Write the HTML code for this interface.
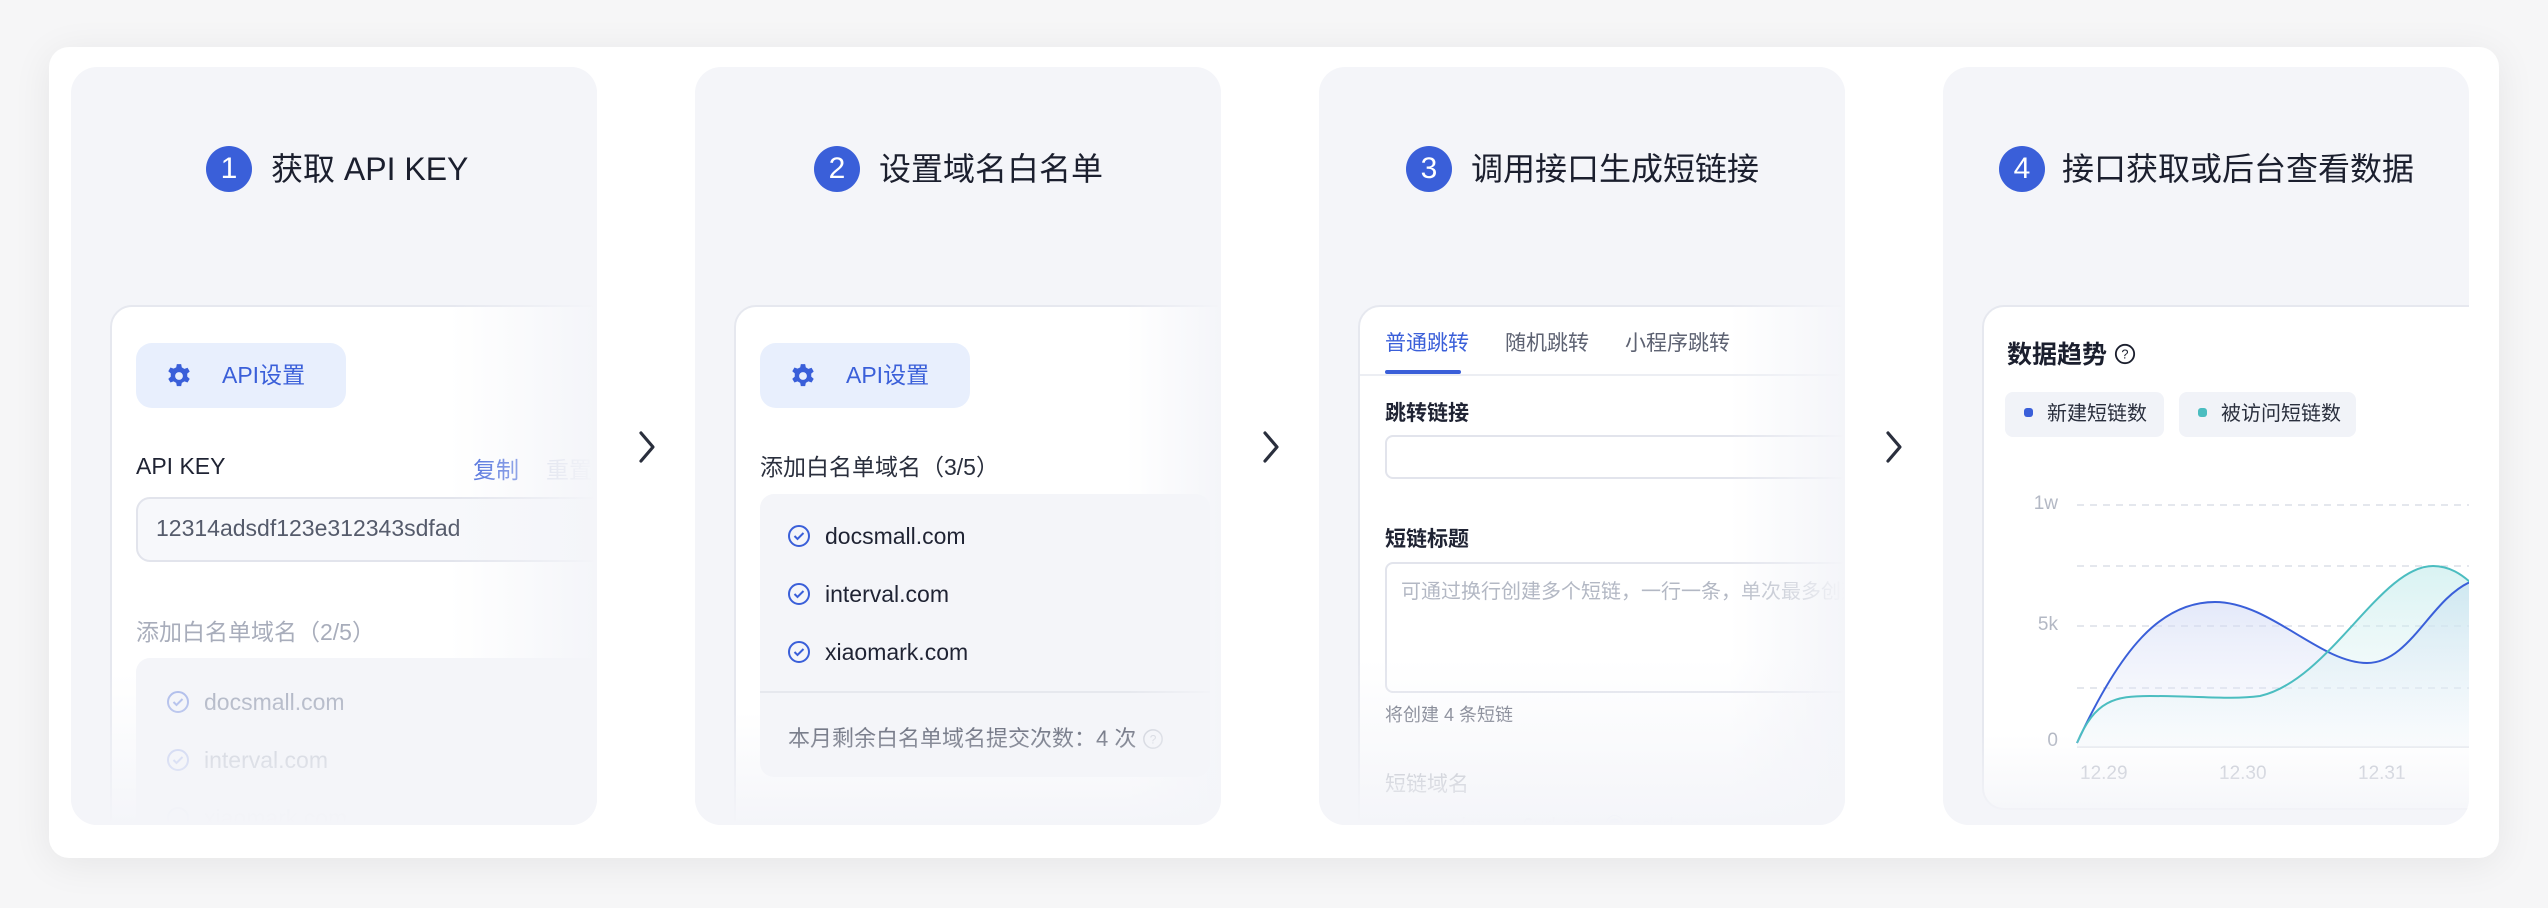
<!DOCTYPE html>
<html><head><meta charset="utf-8"><style>
*{margin:0;padding:0;box-sizing:border-box}
body{width:2548px;height:908px;background:#f6f6f7;font-family:"Liberation Sans","Noto Sans CJK SC",sans-serif;position:relative;overflow:hidden;color:#1f2333}
.a{position:absolute;white-space:nowrap}
.outer{left:49px;top:47px;width:2450px;height:811px;background:#fff;border-radius:20px;box-shadow:0 6px 40px rgba(0,0,0,.07)}
.panel{top:67px;width:526px;height:758px;background:#f4f5f9;border-radius:26px;overflow:hidden}
.num{width:46px;height:46px;border-radius:50%;background:#3a5fd9;color:#fff;font-size:30px;line-height:46px;text-align:center;top:146px}
.ttl{top:146px;font-size:32px;line-height:46px;color:#1b1f2e}
.card{background:#fff;border:2px solid #e6e8ef;border-radius:22px;}
.fade{position:absolute;pointer-events:none}
.btn{background:#e8effd;border-radius:16px;height:65px;color:#3a5fd9;font-size:23px;line-height:65px}
.chev{top:430px}
.blue{color:#3a5fd9}
.it{height:58px;line-height:58px;font-size:23px}
.it svg{vertical-align:-4px;margin-right:14px}
</style></head><body>
<div class="a outer"></div>

<!-- panel 1 -->
<div class="a panel" style="left:71px">
  <div class="a card" style="left:39px;top:238px;width:600px;height:600px"></div>
  <div class="a btn" style="left:65px;top:276px;width:210px"><svg class="a" style="left:30px;top:20px" width="26" height="26" viewBox="0 0 24 24"><path fill="#3a5fd9" d="M10 1h4l.6 3 2.4 1.4 2.9-1 2 3.4-2.3 2v2.8l2.3 2-2 3.4-2.9-1-2.4 1.4-.6 3h-4l-.6-3-2.4-1.4-2.9 1-2-3.4 2.3-2V9.6l-2.3-2 2-3.4 2.9 1L9.4 4z"/><circle cx="12" cy="12" r="3.6" fill="#e8effd"/></svg><span class="a" style="left:86px;top:0">API设置</span></div>
  <div class="a" style="left:65px;top:386px;font-size:23px">API KEY</div>
  <div class="a blue" style="left:402px;top:384px;font-size:23px">复制</div>
  <div class="a" style="left:475px;top:384px;font-size:23px;color:#c5cbe0">重置</div>
  <div class="a" style="left:65px;top:430px;width:500px;height:65px;border:2px solid #e2e4ec;border-radius:14px;background:#f7f8fb"></div>
  <div class="a" style="left:85px;top:448px;font-size:23px;color:#555b6b">12314adsdf123e312343sdfad</div>
  <div class="a" style="left:65px;top:546px;font-size:23px;color:#a8adbb">添加白名单域名（2/5）</div>
  <div class="a" style="left:65px;top:591px;width:480px;height:200px;background:#f4f5f9;border-radius:14px"></div>
  <div class="a" style="left:95px;top:606px;color:#aab0c0">
    <div class="it"><svg width="24" height="24" viewBox="0 0 24 24"><circle cx="12" cy="12" r="10" fill="none" stroke="#a9b8ea" stroke-width="2"/><path d="M7.5 12l3 3 6-6" fill="none" stroke="#a9b8ea" stroke-width="2"/></svg>docsmall.com</div>
    <div class="it"><svg width="24" height="24" viewBox="0 0 24 24"><circle cx="12" cy="12" r="10" fill="none" stroke="#b8c4ee" stroke-width="2"/><path d="M7.5 12l3 3 6-6" fill="none" stroke="#b8c4ee" stroke-width="2"/></svg><span style="color:#bcc1cd">interval.com</span></div>
    <div class="it"><svg width="24" height="24" viewBox="0 0 24 24"><circle cx="12" cy="12" r="10" fill="none" stroke="#dde2f3" stroke-width="2"/></svg><span style="color:#dfe2e9">xiaomark.com</span></div>
  </div>
  <div class="fade" style="left:0;top:0;width:526px;height:758px;background:linear-gradient(90deg,rgba(244,245,249,0) 72%,#f4f5f9 100%)"></div>
  <div class="fade" style="left:0;top:0;width:526px;height:758px;background:linear-gradient(180deg,rgba(244,245,249,0) 80%,#f4f5f9 100%)"></div>
</div>
<div class="a num" style="left:206px">1</div>
<div class="a ttl" style="left:271px">获取 API KEY</div>
<svg class="a chev" style="left:638px" width="18" height="34" viewBox="0 0 18 34"><path d="M3 3l12 14L3 31" fill="none" stroke="#2a2f3d" stroke-width="3.2" stroke-linecap="round" stroke-linejoin="round"/></svg>

<!-- panel 2 -->
<div class="a panel" style="left:695px">
  <div class="a card" style="left:39px;top:238px;width:600px;height:600px"></div>
  <div class="a btn" style="left:65px;top:276px;width:210px"><svg class="a" style="left:30px;top:20px" width="26" height="26" viewBox="0 0 24 24"><path fill="#3a5fd9" d="M10 1h4l.6 3 2.4 1.4 2.9-1 2 3.4-2.3 2v2.8l2.3 2-2 3.4-2.9-1-2.4 1.4-.6 3h-4l-.6-3-2.4-1.4-2.9 1-2-3.4 2.3-2V9.6l-2.3-2 2-3.4 2.9 1L9.4 4z"/><circle cx="12" cy="12" r="3.6" fill="#e8effd"/></svg><span class="a" style="left:86px;top:0">API设置</span></div>
  <div class="a" style="left:65px;top:381px;font-size:23px;color:#2a2f3d">添加白名单域名（3/5）</div>
  <div class="a" style="left:65px;top:427px;width:450px;height:283px;background:#f4f5f9;border-radius:14px"></div>
  <div class="a" style="left:65px;top:624px;width:450px;height:2px;background:#e6e8ee"></div>
  <div class="a" style="left:92px;top:440px;color:#1f2333">
    <div class="it"><svg width="24" height="24" viewBox="0 0 24 24"><circle cx="12" cy="12" r="10" fill="none" stroke="#3a5fd9" stroke-width="2"/><path d="M7.5 12l3 3 6-6" fill="none" stroke="#3a5fd9" stroke-width="2"/></svg>docsmall.com</div>
    <div class="it"><svg width="24" height="24" viewBox="0 0 24 24"><circle cx="12" cy="12" r="10" fill="none" stroke="#3a5fd9" stroke-width="2"/><path d="M7.5 12l3 3 6-6" fill="none" stroke="#3a5fd9" stroke-width="2"/></svg>interval.com</div>
    <div class="it"><svg width="24" height="24" viewBox="0 0 24 24"><circle cx="12" cy="12" r="10" fill="none" stroke="#3a5fd9" stroke-width="2"/><path d="M7.5 12l3 3 6-6" fill="none" stroke="#3a5fd9" stroke-width="2"/></svg>xiaomark.com</div>
  </div>
  <div class="a" style="left:93px;top:654px;font-size:22px;color:#5d6272">本月剩余白名单域名提交次数：4 次 <svg width="22" height="22" viewBox="0 0 24 24" style="vertical-align:-4px"><circle cx="12" cy="12" r="10" fill="none" stroke="#c5c9d3" stroke-width="1.6"/><text x="12" y="17" font-size="13" text-anchor="middle" fill="#c5c9d3" font-family="Liberation Sans">?</text></svg></div>
  <div class="fade" style="left:0;top:0;width:526px;height:758px;background:linear-gradient(90deg,rgba(244,245,249,0) 82%,#f4f5f9 100%)"></div>
  <div class="fade" style="left:0;top:0;width:526px;height:758px;background:linear-gradient(180deg,rgba(244,245,249,0) 85%,#f4f5f9 100%)"></div>
</div>
<div class="a num" style="left:814px">2</div>
<div class="a ttl" style="left:879px">设置域名白名单</div>
<svg class="a chev" style="left:1262px" width="18" height="34" viewBox="0 0 18 34"><path d="M3 3l12 14L3 31" fill="none" stroke="#2a2f3d" stroke-width="3.2" stroke-linecap="round" stroke-linejoin="round"/></svg>

<!-- panel 3 -->
<div class="a panel" style="left:1319px">
  <div class="a card" style="left:39px;top:238px;width:600px;height:600px"></div>
  <div class="a" style="left:66px;top:260px;font-size:21px;color:#3a5fd9">普通跳转</div>
  <div class="a" style="left:186px;top:260px;font-size:21px;color:#5d6272">随机跳转</div>
  <div class="a" style="left:306px;top:260px;font-size:21px;color:#5d6272">小程序跳转</div>
  <div class="a" style="left:41px;top:307px;width:500px;height:2px;background:#eceef3"></div>
  <div class="a" style="left:66px;top:303px;width:76px;height:4px;background:#3a5fd9;border-radius:2px"></div>
  <div class="a" style="left:66px;top:330px;font-size:21px;font-weight:bold">跳转链接</div>
  <div class="a" style="left:66px;top:368px;width:500px;height:44px;border:2px solid #e2e4ec;border-radius:8px"></div>
  <div class="a" style="left:66px;top:456px;font-size:21px;font-weight:bold">短链标题</div>
  <div class="a" style="left:66px;top:495px;width:500px;height:131px;border:2px solid #e2e4ec;border-radius:8px"></div>
  <div class="a" style="left:82px;top:508px;font-size:20px;color:#b3b8c4">可通过换行创建多个短链，一行一条，单次最多创建</div>
  <div class="a" style="left:66px;top:634px;font-size:18px;color:#5d6272">将创建 4 条短链</div>
  <div class="a" style="left:66px;top:701px;font-size:21px;color:#8a8f9c">短链域名</div>
  <div class="a" style="left:66px;top:742px;font-size:20px;color:#d0d4de">○ s.xma.im &nbsp;&nbsp; ○ 6url.co &nbsp;&nbsp; <span style="color:#c5cff0">◉ sourl.co</span></div>
  <div class="fade" style="left:0;top:0;width:526px;height:758px;background:linear-gradient(90deg,rgba(244,245,249,0) 78%,#f4f5f9 100%)"></div>
  <div class="fade" style="left:0;top:0;width:526px;height:758px;background:linear-gradient(180deg,rgba(244,245,249,0) 78%,#f4f5f9 100%)"></div>
</div>
<div class="a num" style="left:1406px">3</div>
<div class="a ttl" style="left:1471px">调用接口生成短链接</div>
<svg class="a chev" style="left:1885px" width="18" height="34" viewBox="0 0 18 34"><path d="M3 3l12 14L3 31" fill="none" stroke="#2a2f3d" stroke-width="3.2" stroke-linecap="round" stroke-linejoin="round"/></svg>

<!-- panel 4 -->
<div class="a panel" style="left:1943px">
  <div class="a card" style="left:39px;top:238px;width:600px;height:505px"></div>
  <div class="a" style="left:64px;top:268px;font-size:25px;font-weight:bold;color:#1b1f2e">数据趋势 <svg width="22" height="22" viewBox="0 0 24 24" style="vertical-align:-2px"><circle cx="12" cy="12" r="10" fill="none" stroke="#1b1f2e" stroke-width="2"/><text x="12" y="17" font-size="14" text-anchor="middle" fill="#1b1f2e" font-family="Liberation Sans" font-weight="normal">?</text></svg></div>
  <div class="a" style="left:62px;top:325px;width:159px;height:45px;background:#f1f3f8;border-radius:8px;font-size:20px;line-height:45px;color:#2a2f3d"><span style="display:inline-block;width:9px;height:9px;border-radius:3px;background:#3a5fd9;margin:0 14px 3px 19px"></span>新建短链数</div>
  <div class="a" style="left:236px;top:325px;width:177px;height:45px;background:#f1f3f8;border-radius:8px;font-size:20px;line-height:45px;color:#2a2f3d"><span style="display:inline-block;width:9px;height:9px;border-radius:3px;background:#4bbdc0;margin:0 14px 3px 19px"></span>被访问短链数</div>
  <div class="a" style="left:75px;top:426px;font-size:19px;color:#b3b8c4;width:40px;text-align:right">1w</div>
  <div class="a" style="left:75px;top:547px;font-size:19px;color:#b3b8c4;width:40px;text-align:right">5k</div>
  <div class="a" style="left:75px;top:663px;font-size:19px;color:#b3b8c4;width:40px;text-align:right">0</div>
  <div class="a" style="left:137px;top:696px;font-size:19px;color:#c0c4ce">12.29</div>
  <div class="a" style="left:276px;top:696px;font-size:19px;color:#c0c4ce">12.30</div>
  <div class="a" style="left:415px;top:696px;font-size:19px;color:#c0c4ce">12.31</div>
  <svg class="a" style="left:0;top:0" width="526" height="758" viewBox="1943 67 526 758">
    <defs>
      <linearGradient id="gb" x1="0" y1="0" x2="0" y2="1"><stop offset="0" stop-color="#c9d3f3" stop-opacity=".6"/><stop offset="1" stop-color="#eef1fb" stop-opacity=".2"/></linearGradient>
      <linearGradient id="gt" x1="0" y1="0" x2="0" y2="1"><stop offset="0" stop-color="#bfeaea" stop-opacity=".6"/><stop offset="1" stop-color="#eef7f8" stop-opacity=".2"/></linearGradient>
    </defs>
    <g stroke="#dcdfe7" stroke-width="1.5" stroke-dasharray="7 6">
      <line x1="2077" y1="505" x2="2470" y2="505"/><line x1="2077" y1="566" x2="2470" y2="566"/>
      <line x1="2077" y1="626" x2="2470" y2="626"/><line x1="2077" y1="688" x2="2470" y2="688"/>
    </g>
    <line x1="2077" y1="747" x2="2470" y2="747" stroke="#e2e4ea" stroke-width="1.5"/>
    <path d="M2077 743 C2120 650 2160 602 2215 602 C2270 602 2320 663 2367 663 C2410 663 2430 600 2470 582 L2470 747 L2077 747Z" fill="url(#gb)"/>
    <path d="M2077 743 C2095 700 2115 696 2150 696 C2200 696 2230 700 2260 696 C2330 680 2380 566 2433 566 C2450 566 2462 575 2470 582 L2470 747 L2077 747Z" fill="url(#gt)"/>
    <path d="M2077 743 C2120 650 2160 602 2215 602 C2270 602 2320 663 2367 663 C2410 663 2430 600 2470 582" fill="none" stroke="#3a5fd9" stroke-width="2"/>
    <path d="M2077 743 C2095 700 2115 696 2150 696 C2200 696 2230 700 2260 696 C2330 680 2380 566 2433 566 C2450 566 2462 575 2470 582" fill="none" stroke="#4bbdc0" stroke-width="2"/>
  </svg>
  <div class="fade" style="left:0;top:0;width:526px;height:758px;background:linear-gradient(180deg,rgba(244,245,249,0) 88%,#f4f5f9 100%)"></div>
</div>
<div class="a num" style="left:1999px">4</div>
<div class="a ttl" style="left:2062px">接口获取或后台查看数据</div>
</body></html>
